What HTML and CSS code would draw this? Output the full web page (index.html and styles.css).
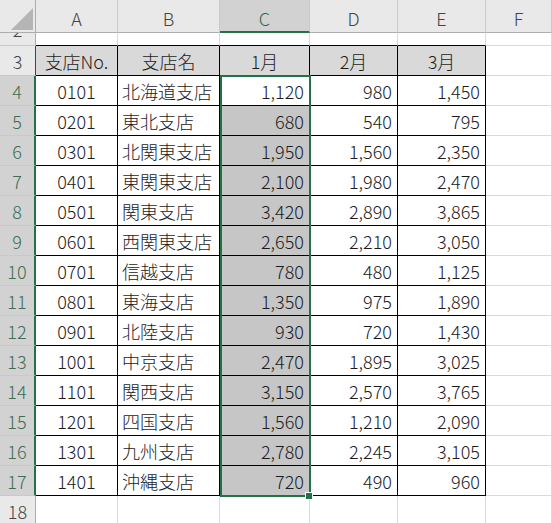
FILE: index.html
```html
<!DOCTYPE html>
<html lang="ja">
<head>
<meta charset="utf-8">
<link rel="stylesheet" href="styles.css">
</head>
<body>
<div class="sheet">
  <div class="grid">
    <div class="c ch corner"><div class="tri"></div></div>
    <div class="c ch">A</div><div class="c ch">B</div><div class="c ch sel">C</div><div class="c ch">D</div><div class="c ch">E</div><div class="c ch">F</div>

    <div class="c rh r2"><span>2</span></div>
    <div class="c top"></div><div class="c top"></div><div class="c top"></div><div class="c top"></div><div class="c top"></div><div class="c"></div>

    <div class="c rh r3">3</div>
    <div class="c t th">支店No.</div><div class="c t th">支店名</div><div class="c t th">1月</div><div class="c t th">2月</div><div class="c t th">3月</div><div class="c"></div>

    <div class="c rh sel">4</div>
    <div class="c t ctr">0101</div><div class="c t txt">北海道支店</div><div class="c t num">1,120</div><div class="c t num">980</div><div class="c t num">1,450</div><div class="c"></div>

    <div class="c rh sel">5</div>
    <div class="c t ctr">0201</div><div class="c t txt">東北支店</div><div class="c t num hl">680</div><div class="c t num">540</div><div class="c t num">795</div><div class="c"></div>

    <div class="c rh sel">6</div>
    <div class="c t ctr">0301</div><div class="c t txt">北関東支店</div><div class="c t num hl">1,950</div><div class="c t num">1,560</div><div class="c t num">2,350</div><div class="c"></div>

    <div class="c rh sel">7</div>
    <div class="c t ctr">0401</div><div class="c t txt">東関東支店</div><div class="c t num hl">2,100</div><div class="c t num">1,980</div><div class="c t num">2,470</div><div class="c"></div>

    <div class="c rh sel">8</div>
    <div class="c t ctr">0501</div><div class="c t txt">関東支店</div><div class="c t num hl">3,420</div><div class="c t num">2,890</div><div class="c t num">3,865</div><div class="c"></div>

    <div class="c rh sel">9</div>
    <div class="c t ctr">0601</div><div class="c t txt">西関東支店</div><div class="c t num hl">2,650</div><div class="c t num">2,210</div><div class="c t num">3,050</div><div class="c"></div>

    <div class="c rh sel">10</div>
    <div class="c t ctr">0701</div><div class="c t txt">信越支店</div><div class="c t num hl">780</div><div class="c t num">480</div><div class="c t num">1,125</div><div class="c"></div>

    <div class="c rh sel">11</div>
    <div class="c t ctr">0801</div><div class="c t txt">東海支店</div><div class="c t num hl">1,350</div><div class="c t num">975</div><div class="c t num">1,890</div><div class="c"></div>

    <div class="c rh sel">12</div>
    <div class="c t ctr">0901</div><div class="c t txt">北陸支店</div><div class="c t num hl">930</div><div class="c t num">720</div><div class="c t num">1,430</div><div class="c"></div>

    <div class="c rh sel">13</div>
    <div class="c t ctr">1001</div><div class="c t txt">中京支店</div><div class="c t num hl">2,470</div><div class="c t num">1,895</div><div class="c t num">3,025</div><div class="c"></div>

    <div class="c rh sel">14</div>
    <div class="c t ctr">1101</div><div class="c t txt">関西支店</div><div class="c t num hl">3,150</div><div class="c t num">2,570</div><div class="c t num">3,765</div><div class="c"></div>

    <div class="c rh sel">15</div>
    <div class="c t ctr">1201</div><div class="c t txt">四国支店</div><div class="c t num hl">1,560</div><div class="c t num">1,210</div><div class="c t num">2,090</div><div class="c"></div>

    <div class="c rh sel">16</div>
    <div class="c t ctr">1301</div><div class="c t txt">九州支店</div><div class="c t num hl">2,780</div><div class="c t num">2,245</div><div class="c t num">3,105</div><div class="c"></div>

    <div class="c rh sel">17</div>
    <div class="c t ctr">1401</div><div class="c t txt">沖縄支店</div><div class="c t num hl">720</div><div class="c t num">490</div><div class="c t num">960</div><div class="c"></div>

    <div class="c rh">18</div>
    <div class="c"></div><div class="c"></div><div class="c"></div><div class="c"></div><div class="c"></div><div class="c"></div>
  </div>
  <div class="selbox"></div>
  <div class="handle"></div>
</div>
</body>
</html>
```

FILE: styles.css
```css
html, body {
  margin: 0;
  padding: 0;
  background: #fff;
  overflow: hidden;
}
.sheet {
  position: relative;
  width: 552px;
  height: 523px;
  overflow: hidden;
}
.grid {
  display: grid;
  grid-template-columns: 36px 82px 102px 90px 88px 88px 1fr;
  grid-template-rows: 33px 13px repeat(15, 30px) 30px;
  font-family: "Noto Sans CJK JP", "Noto Sans", sans-serif;
  font-size: 18px;
  font-weight: 300;
  color: #1c1c1c;
}
.c {
  box-sizing: border-box;
  border-right: 1px solid #d9d9d9;
  border-bottom: 1px solid #d9d9d9;
  display: flex;
  align-items: center;
  line-height: 20px;
  overflow: hidden;
  white-space: nowrap;
}
.ch {
  background: #e9e9e9;
  border-right-color: #c9c9c9;
  border-bottom-color: #adadad;
  justify-content: center;
  font-size: 18px;
  font-weight: 300;
  color: #444;
  padding-top: 3px;
}
.ch.sel {
  background: #d2d2d2;
  color: #2a6a46;
  border-bottom: 2px solid #217346;
  padding-top: 4px;
}
.corner {
  justify-content: flex-end;
  align-items: flex-end;
  padding: 0 2px 2px 0;
  border-right-color: #adadad;
}
.tri {
  width: 22px;
  height: 22px;
  background: #b5b5b5;
  clip-path: polygon(100% 0, 100% 100%, 0 100%);
}
.rh {
  background: #e9e9e9;
  border-right-color: #adadad;
  border-bottom-color: #c9c9c9;
  justify-content: center;
  font-size: 18px;
  font-weight: 300;
  color: #444;
}
.rh.sel {
  background: #d2d2d2;
  color: #3b6e52;
  border-right: 2px solid #217346;
}
.rh.r3 {
  border-right-color: #444;
}
.r2 {
  align-items: flex-start;
}
.r2 span {
  margin-top: -14px;
}
.top {
  border-bottom-color: #000;
}
.t {
  border-right-color: #000;
  border-bottom-color: #000;
}
.th {
  background: #d9d9d9;
  justify-content: center;
}
.ctr {
  justify-content: center;
}
.txt {
  justify-content: flex-start;
  padding-left: 4px;
}
.num {
  justify-content: flex-end;
  padding-right: 5px;
}
.hl {
  background: #c6c6c6;
}
.selbox {
  position: absolute;
  left: 220px;
  top: 75px;
  width: 91px;
  height: 422px;
  box-sizing: border-box;
  border: 2px solid #217346;
  pointer-events: none;
}
.handle {
  position: absolute;
  left: 305px;
  top: 492px;
  width: 8px;
  height: 8px;
  box-sizing: border-box;
  background: #217346;
  border: 1px solid #fff;
}
```
